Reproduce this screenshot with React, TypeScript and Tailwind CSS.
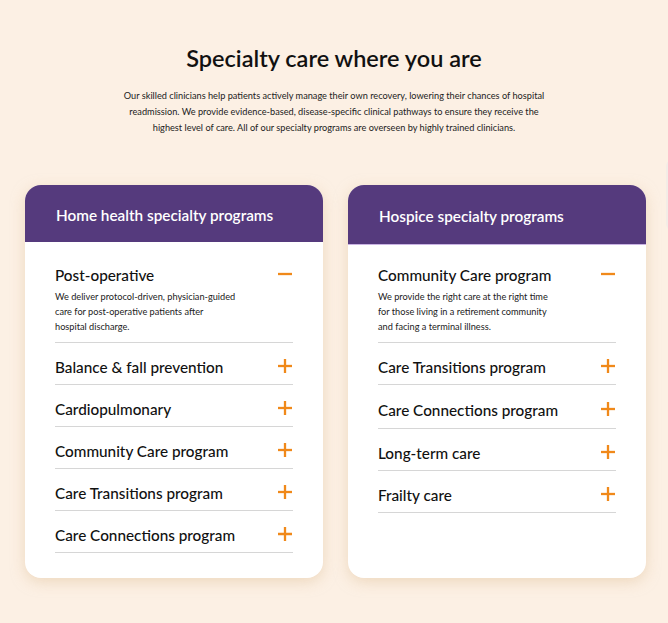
import React from 'react';

type Program = { title: string; body?: string[] };

const homeHealth: Program[] = [
  {
    title: 'Post-operative',
    body: ['We deliver protocol-driven, physician-guided', 'care for post-operative patients after', 'hospital discharge.'],
  },
  { title: 'Balance & fall prevention' },
  { title: 'Cardiopulmonary' },
  { title: 'Community Care program' },
  { title: 'Care Transitions program' },
  { title: 'Care Connections program' },
];

const hospice: Program[] = [
  {
    title: 'Community Care program',
    body: ['We provide the right care at the right time', 'for those living in a retirement community', 'and facing a terminal illness.'],
  },
  { title: 'Care Transitions program' },
  { title: 'Care Connections program' },
  { title: 'Long-term care' },
  { title: 'Frailty care' },
];

const Toggle = ({ open }: { open: boolean }) => (
  <svg width="14" height="14" viewBox="0 0 14 14" className="shrink-0 -mt-[2px]">
    <path d="M0 7h14" stroke="#f0891a" strokeWidth="2.3" />
    {!open && <path d="M7 0v14" stroke="#f0891a" strokeWidth="2.3" />}
  </svg>
);

const ProgramCard = ({ heading, items, tall }: { heading: string; items: Program[]; tall?: boolean }) => {
  const [openIndex, setOpenIndex] = React.useState(0);

  return (
    <div className="w-[298px] h-[393px] bg-white rounded-[16px] overflow-hidden shadow-[0_4px_14px_rgba(226,196,160,0.55)]">
      <div
        className={`bg-[#553a7d] px-[31px] pt-[3px] flex items-center ${tall ? 'h-[60px] border-b border-[#c9b3e3]' : 'h-[57px]'}`}
      >
        <h2 className="text-white text-[15.3px] font-semibold">{heading}</h2>
      </div>
      <div className={`px-[30px] ${tall ? 'pt-[21px]' : 'pt-[24px]'}`}>
        {items.map((item, i) => {
          const open = i === openIndex;
          return (
            <div key={item.title} className="border-b border-[#d6d6d6]">
              <button
                onClick={() => setOpenIndex(open ? -1 : i)}
                className={`w-full flex items-center justify-between text-left pr-[1px] ${
                  open ? 'pt-0 pb-[5px]' : tall && i === 2 ? 'pt-[16px] pb-[9px]' : 'pt-[15px] pb-[8px]'
                }`}
              >
                <span className="text-[15.3px] leading-[18px] font-medium text-[#111]">{item.title}</span>
                <Toggle open={open} />
              </button>
              {open && item.body && (
                <p className="text-[9.2px] leading-[15px] text-[#222] pb-[8px]">
                  {item.body.map((line) => (
                    <span key={line} className="block">
                      {line}
                    </span>
                  ))}
                </p>
              )}
            </div>
          );
        })}
      </div>
    </div>
  );
};

export default function App() {
  return (
    <div className="min-h-[623px] w-full bg-[#fcf0e4] font-['Lato',sans-serif] relative overflow-hidden">
      <div className="pt-[44px] flex flex-col items-center">
        <h1 className="text-[23.5px] font-semibold text-[#111] leading-[28px]">Specialty care where you are</h1>
        <p className="mt-[16px] text-center text-[9.2px] leading-[16px] text-[#222]">
          <span className="block">
            Our skilled clinicians help patients actively manage their own recovery, lowering their chances of hospital
          </span>
          <span className="block">
            readmission. We provide evidence-based, disease-specific clinical pathways to ensure they receive the
          </span>
          <span className="block">
            highest level of care. All of our specialty programs are overseen by highly trained clinicians.
          </span>
        </p>
      </div>
      <div className="mt-[49px] flex pl-[25px] gap-[25px]">
        <ProgramCard heading="Home health specialty programs" items={homeHealth} />
        <ProgramCard heading="Hospice specialty programs" items={hospice} tall />
      </div>
      <div className="absolute left-[666px] top-[160px] w-[20px] h-[70px] rounded-l-[6px] bg-[#f3ece6]" />
    </div>
  );
}
